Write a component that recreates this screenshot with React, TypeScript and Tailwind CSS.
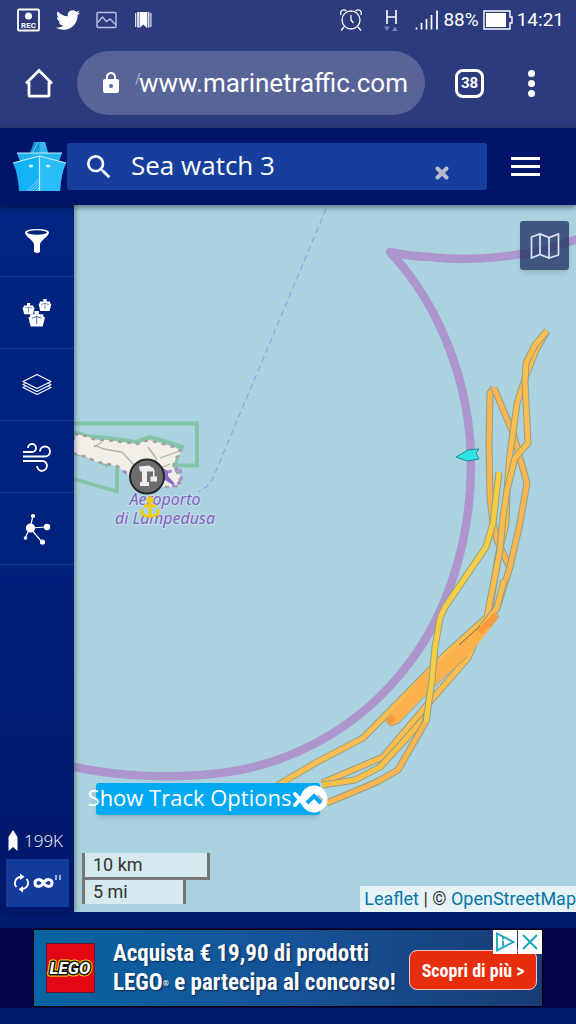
import React from "react";
import { FaTwitter } from "react-icons/fa";
import { MdLock, MdSearch } from "react-icons/md";

const tracks = [
    { color: "#f9b650", points: "494,388 490,393 489,443 490,497 493,523 497,540 510,568" },
    { color: "#f9b650", points: "494,388 513,433 527,483 520,523 510,567 497,608" },
    { color: "#fbbd50", points: "547,331 536,350 527,373 517,403 513,433 510,453 507,490 506,523 498,557 490,607" },
    { color: "#fbbd50", points: "547,331 535,345 526,363 525,382 528,443 515,458 507,490 503,517 500,550 487,617 447,653 383,718 363,738 317,762 283,782 265,794" },
    { color: "#fbbd50", points: "504,580 497,608 480,630 468,658 427,705 383,757 322,783" },
    { color: "#f8c049", points: "425,717 405,740 380,767 355,780 322,785" },
    { color: "#f9b650", points: "427,713 425,723 398,770 377,782 327,803" },
    { color: "#f5cd45", points: "499,472 493,523 486,547 445,607 440,618 435,647 432,680 426,722" },
];

const Track = ({ color, points }: { color: string; points: string }) => {
    return (
        <g fill="none" strokeLinejoin="round">
            <polyline points={points} stroke="#949f86" strokeWidth="7" />
            <polyline points={points} stroke={color} strokeWidth="5" />
        </g>
    )
}

const StatusBar = () => {
    return (
        <div className="flex h-10 items-center justify-between pr-3 pl-4 text-white">
            <div className="flex items-center gap-4">
                <svg width="24" height="24" viewBox="0 0 24 24" fill="none" aria-hidden="true">
                    <rect x="2" y="1.500" width="21" height="21" rx="1" stroke="currentColor" strokeWidth="1.800" />
                    <circle cx="12.500" cy="8" r="3.500" fill="currentColor" />
                    <text x="12.500" y="20" textAnchor="middle" fontSize="8" fontWeight="700" fontFamily="Roboto, sans-serif" fill="currentColor">REC</text>
                </svg>
                <FaTwitter className="h-6 w-6" />
                <svg width="22" height="18" viewBox="0 0 22 18" fill="none" stroke="#b9c2e4" strokeWidth="1.400" aria-hidden="true">
                    <rect x="1" y="1.500" width="19" height="15" rx="1" />
                    <path d="M1.500 11.500 6.500 6l4 4.500L14 8l6 6" />
                </svg>
                <svg width="18" height="18" viewBox="0 0 18 18" aria-hidden="true">
                    <path d="M1 2h1.300v14H1zM16.200 2h1.300v14h-1.300zM3 1h2v15.500H3zM13.500 1h2v15.500h-2z" fill="#d5daec" />
                    <path d="M5.500 1H13v16l-3.700-3.500L5.500 17z" fill="currentColor" />
                </svg>
            </div>
            <div className="flex items-center">
                <svg className="mr-5" width="24" height="24" viewBox="0 0 24 24" fill="none" stroke="currentColor" strokeWidth="1.300" aria-hidden="true">
                    <circle cx="12" cy="12" r="9" />
                    <path d="M12 7v5l2.500 3M2 7C.5 3 4 .500 7.500 3M22 7c1.500-4-2-6.500-5.500-4M5 19l-3 3.500M19 19l3 3.500" />
                </svg>
                <svg className="mr-4" width="16" height="24" viewBox="0 0 16 24" fill="none" aria-hidden="true">
                    <path d="M4 2v14M13 2v14M4 9h9" stroke="currentColor" strokeWidth="1.600" />
                    <path d="M1 18.500h6L4 23zM9 23h6l-3-4.500z" fill="#7480b0" />
                </svg>
                <svg className="mr-1" width="24" height="22" viewBox="0 0 24 22" stroke="currentColor" strokeWidth="1.700" aria-hidden="true">
                    <path d="M1.500 18.500v2M6.500 14v6.500M11.500 10v10.500M16.500 6v14.500M22 1.500v19" />
                </svg>
                <span className="font-[Roboto,sans-serif] text-[19px]">88%</span>
                <svg className="mr-1 ml-1" width="30" height="20" viewBox="0 0 30 20" fill="none" aria-hidden="true">
                    <path d="M1 1h26v6h2v6h-2v6H1z" stroke="currentColor" strokeWidth="1.400" />
                    <path d="M3 3h20v14H3z" fill="currentColor" />
                </svg>
                <span className="font-[Roboto,sans-serif] text-[19px]">14:21</span>
            </div>
        </div>
    )
}

const BrowserBar = () => {
    return (
        <div className="flex h-[88px] items-center pb-0.5 text-white">
            <a href="#home" aria-label="Home" className="flex w-[77px] justify-center">
                <svg width="30" height="30" viewBox="0 0 30 30" fill="none" stroke="currentColor" strokeWidth="2.800">
                    <path d="M2 15.500 15 2.500l13 13M5 14v13q0 1.200 1.200 1.200h17.600Q25 28.200 25 27V14" strokeLinejoin="miter" />
                </svg>
            </a>
            <div className="flex h-16 min-w-0 flex-1 items-center rounded-full bg-[#586398] pr-2 pl-[22px]">
                <MdLock className="h-6 w-6 shrink-0" />
                <span className="ml-3 w-1 shrink-0 pb-2 text-right font-[Roboto,sans-serif] text-[14px] text-[#b6bdd8]">/</span>
                <input aria-label="Address" readOnly value="www.marinetraffic.com" className="min-w-0 flex-1 bg-transparent font-[Roboto,sans-serif] text-[26px] outline-none" />
            </div>
            <button aria-label="Tabs" className="mx-[30px] flex h-[29px] w-[29px] items-center justify-center rounded-lg border-3 border-white font-[Roboto,sans-serif] text-[15px] font-bold">38</button>
            <button aria-label="Menu" className="mr-8 ml-1 flex w-[26px] shrink-0 flex-col items-center gap-[3px]">
                <span className="h-[7px] w-[7px] rounded-full bg-white"></span>
                <span className="h-[7px] w-[7px] rounded-full bg-white"></span>
                <span className="h-[7px] w-[7px] rounded-full bg-white"></span>
            </button>
        </div>
    )
}

const Header = () => {
    return (
        <header className="relative z-20 flex h-[77px] items-center bg-[#001469] pl-3 shadow-[0_2px_6px_rgba(0,0,0,0.5)]">
            <a href="#top" aria-label="MarineTraffic" className="shrink-0">
                <svg width="55" height="52" viewBox="0 0 55 52">
                    <path d="M22 1h11l3 11H18z" fill="#1597dc" />
                    <path d="M27.500 1H33l3 11h-8.500z" fill="#35b6f0" />
                    <path d="M5 12h45l-4 11H9z" fill="#23b4ee" />
                    <path d="M1 22 27.500 15 54 22q-5 10-6 28H7Q6 32 1 22z" fill="#14b2f4" />
                    <path d="M27.500 15 54 22q-5 10-6 28H27.500z" fill="#29bef7" />
                    <path d="M5 12h45M1 22l26.500-7L54 22M27.500 15v35" fill="none" stroke="#c9f0ff" strokeWidth="1.200" />
                    <path d="m15 50 12-12M18 50l9-9M21 50l6-6M24 50l3-3M26 1l-5 10" stroke="#9cdcf8" strokeWidth=".8" />
                    <ellipse cx="19" cy="25" rx="2.200" ry="1.500" fill="#d4f4ff" />
                    <ellipse cx="36" cy="25" rx="2.200" ry="1.500" fill="#d4f4ff" />
                </svg>
            </a>
            <form className="flex h-[47px] min-w-0 flex-1 items-center rounded-[3px] bg-[#163e9c] pl-4">
                <MdSearch className="h-8 w-8 shrink-0 text-white" />
                <input aria-label="Search" defaultValue="Sea watch 3" className="ml-4 min-w-0 flex-1 bg-transparent pb-0.5 font-['Open_Sans',sans-serif] text-[26px] text-white outline-none" />
                <button type="button" aria-label="Clear" className="mt-3 mr-[38px]">
                    <svg width="14" height="14" viewBox="0 0 14 14" stroke="#b9bdcb" strokeWidth="4" strokeLinecap="round">
                        <path d="m2.500 2.500 9 9m0-9-9 9" />
                    </svg>
                </button>
            </form>
            <button aria-label="Open menu" className="mr-9 ml-6 flex w-[29px] flex-col gap-[5px]">
                <span className="h-[3px] bg-white"></span>
                <span className="h-[3px] bg-white"></span>
                <span className="h-[3px] bg-white"></span>
            </button>
        </header>
    )
}

const Boat = ({ transform }: { transform: string }) => {
    return (
        <g transform={transform}>
            <path d="M5 0h4v3h4v2l1.500 1-2 8h-11L-.5 6 1 5V3h4z" fill="#fff" />
            <path d="M7 5v7M2.500 6.500 7 5l4.500 1.500" stroke="#00217c" strokeWidth=".6" fill="none" />
        </g>
    )
}

const Sidebar = () => {
    const item = "flex h-[72px] items-center justify-center border-b border-[#1f3d8e] text-white"
    return (
        <nav className="relative z-10 flex w-[74px] shrink-0 flex-col bg-linear-to-b from-[#002481] via-[#00217c] to-[#001669] shadow-[2px_0_4px_rgba(0,0,0,0.3)]">
            <button aria-label="Filters" className={item}>
                <svg width="26" height="26" viewBox="0 0 26 26" fill="currentColor">
                    <path d="M1 4.500Q1 1 13 1t12 3.500c0 4-9 8-9 12V24q-3 2-6 0v-7.500c0-4-9-8-9-12z" />
                    <ellipse cx="13" cy="4.500" rx="10" ry="2.200" fill="#00237f" />
                </svg>
            </button>
            <button aria-label="Fleets" className={item}>
                <svg width="30" height="30" viewBox="0 0 30 30">
                    <Boat transform="translate(1 5) scale(.8)" />
                    <Boat transform="translate(17 1) scale(.85)" />
                    <Boat transform="translate(7 13) scale(1.100)" />
                </svg>
            </button>
            <button aria-label="Layers" className={item}>
                <svg width="30" height="24" viewBox="0 0 30 24" fill="none" stroke="currentColor" strokeWidth="1.100" strokeLinejoin="round">
                    <path d="m1 8.500 14-7 14 7-14 7zM4 10l-3 1.500 14 7 14-7-3-1.500M4 13l-3 1.500 14 7 14-7-3-1.500" />
                </svg>
            </button>
            <button aria-label="Weather" className={item}>
                <svg width="30" height="30" viewBox="0 0 30 30" fill="none" stroke="currentColor" strokeWidth="1.800">
                    <path d="M1 10h9a4 4 0 1 0-4-4M1 14.500h22a5 5 0 1 0-5-5M1 19h18a5 5 0 1 1-4 5" />
                </svg>
            </button>
            <button aria-label="Density" className={item}>
                <svg width="30" height="32" viewBox="0 0 30 32" fill="currentColor" stroke="currentColor" strokeWidth="1.200">
                    <path d="m8 15 3-12M8 15l17-1M8 15l12 14M8 15 3 25" />
                    <circle cx="8.500" cy="15" r="4" />
                    <circle cx="11" cy="3" r="1.500" />
                    <circle cx="25" cy="14" r="2.600" />
                    <circle cx="20.500" cy="29" r="2" />
                    <circle cx="3.500" cy="25" r="1.200" />
                </svg>
            </button>
            <div className="mt-auto flex items-center gap-1.5 pl-2 text-white">
                <svg width="10" height="21" viewBox="0 0 10 21" fill="currentColor" aria-hidden="true"><path d="m5 0 4.500 7v14L5 17 .500 21V7z" /></svg>
                <span className="font-['Open_Sans',sans-serif] text-[17px] font-light">199K</span>
            </div>
            <button aria-label="Refresh rate" className="mt-1.5 mr-[5px] mb-[5px] ml-1.5 flex h-12 items-center justify-center bg-[#133b99] text-white">
                <svg width="52" height="22" viewBox="0 0 52 22" fill="none" stroke="currentColor" strokeWidth="1.800">
                    <path d="M4.500 15A6 6 0 0 1 9 5M14.500 7A6 6 0 0 1 10 17" />
                    <path d="m8 1.500 4.500 3.200L8 8zM11 14l-4.500 3.300L11 20.500z" fill="currentColor" stroke="none" />
                    <path d="M31.500 11c-3-5-8.500-4-8.500 0s5.500 5 8.500 0 8.500-4 8.500 0-5.500 5-8.500 0z" strokeWidth="3" />
                    <path d="M44 3v5M48 3v5" strokeWidth="1.200" />
                </svg>
            </button>
        </nav>
    )
}

const MapView = () => {
    return (
        <section className="relative min-w-0 flex-1 overflow-hidden bg-[#aad3df]">
            <svg className="absolute inset-0 h-full w-full" viewBox="74 205 502 707" preserveAspectRatio="xMidYMid slice" role="img" aria-label="Map">
                <path d="M326 209 213 478q-4 9-15 14" fill="none" stroke="#8ba9df" strokeWidth="1.300" strokeDasharray="6 4" />
                <g fill="none" stroke="#83c5a8" strokeWidth="3.800">
                    <path d="M74 423.500h123v42h-24M74 479l43 12.500v-25" />
                    <path d="m74 432 12 4 22 2 28 4 14-5 14 4 18 6-5 10-2 10-12 5M74 453l18 3 16 10" strokeWidth="4" />
                </g>
                <path d="m74 434 12 2 10 4 12 0 14 2 16 2 10-4 12 3 14 4 8 5-6 6-3 9 7 9-1 10-12 1-18-3-20-9-12-9-20-4-10-5-15-4z" fill="#f2efe9" stroke="#a79f98" strokeWidth="2.500" strokeDasharray="4 5" />
                <path d="m94 445 10 4 18 3 12 13 20 0M102 442l-8 5M148 447l8 11 0 12M160 458l20-7M156 470l14-6" fill="none" stroke="#b6aca8" strokeWidth="1.300" />
                <path d="m163 468 5 3 0 5 7 8-2 1-8-5-4 4z" fill="#8a69c9" />
                <path d="m168 472 12-4 2 14-10 4M123 471l8 4" fill="none" stroke="#a98ad0" strokeWidth="3" strokeDasharray="4 3" />
                <path d="M580 238C530 258 470 262 430 257Q408 256 390 252C440 305 471 385 471 465C471 541 447 613 410 662C358 732 280 771 200 775C150 779 100 773 70 766" fill="none" stroke="#ac96cd" strokeWidth="8.500" strokeLinejoin="round" />
                {tracks.slice(0, 7).map((t) => <Track key={t.points} {...t} />)}
                <path d="m385 721 5 5 8-3 34-35 37-33 29-36-1-7-17 13-60 53z" fill="#fbb24c" />
                <path d="m386 721 5 5 8-3 34-35 34-31M490 627l9-11-4-4" fill="none" stroke="#a3a07d" strokeWidth="1" />
                <path d="m459 645 21-19" stroke="#7b7048" strokeWidth="1" />
                <path d="m388 722 6-5M480 632l16-17" stroke="#fa983c" strokeWidth="6" />
                <Track {...tracks[7]} />
                <path d="m456 457 12-7 11-1-3 4 3 6-12 2z" fill="#2fe3e6" stroke="#1d8c96" strokeWidth="1" />
                <g fill="#8461c4" stroke="#c6dfea" strokeWidth="2" paintOrder="stroke" fontFamily="'Noto Sans', sans-serif" fontSize="16" fontStyle="italic" textAnchor="middle">
                    <text x="165" y="505">Aeroporto</text>
                    <text x="165" y="524">di Lampedusa</text>
                </g>
                <circle cx="147" cy="476.500" r="17" fill="#6d6d6d" stroke="#262626" strokeWidth="2" />
                <path d="M139 466.500l10-1 5 3v3h-14zM142 471h5v11h2v4h-9v-4h2zM153 470h1.500v6.500h2.500v5h-6.500v-5h2.500z" fill="#eee" />
                <g fill="none" stroke="#f2cb0d" strokeWidth="2.800">
                    <circle cx="150" cy="500" r="2" />
                    <path d="M150 502v14M144 506h12M142 509v5q8 5 16 0v-5" />
                </g>
            </svg>
            <button aria-label="Map type" className="absolute top-4 right-[7px] flex h-[49px] w-[49px] items-center justify-center rounded-[3px] bg-[#1b2e5f]/75 shadow-md">
                <svg width="30" height="26" viewBox="0 0 30 26" fill="none" stroke="#dbe3f1" strokeWidth="1.700">
                    <path d="m1.500 4 8.500-3 9 3.500L28.500 1v21L19 25l-9-3.500L1.500 25zM10 1v20.500M19 4.500V25" />
                </svg>
            </button>
            <button className="absolute bottom-[97px] left-[22px] flex h-8 w-56 items-center justify-center rounded-[3px] bg-[#00a9f1] font-['Open_Sans',sans-serif] text-[22px] whitespace-nowrap text-white shadow-md">
                <span className="shrink-0 pb-[3px]">Show Track Options</span>
                <svg className="shrink-0" width="37" height="28" viewBox="0 0 37 28" fill="none" aria-hidden="true">
                    <path d="m4 9 10 11M14 9 4 20" stroke="#fff" strokeWidth="4" strokeLinecap="round" />
                    <circle cx="23" cy="14" r="13.500" fill="#fff" />
                    <path d="m26 11 5 5" stroke="#aebfd0" strokeWidth="4" />
                    <path d="m16 18 7-7 7 7" stroke="#00a9f1" strokeWidth="4" />
                </svg>
            </button>
            <div className="absolute bottom-2 left-2 flex flex-col items-start font-[Roboto,sans-serif] text-[18px] leading-6 text-[#333]">
                <div className="w-32 border-x-3 border-b-3 border-[#777] bg-white/50 pl-2">10 km</div>
                <div className="w-[104px] border-x-3 border-[#777] bg-white/50 pl-2">5 mi</div>
            </div>
            <div className="absolute right-0 bottom-0 bg-white/70 pl-1 font-[Roboto,sans-serif] text-[18px] leading-[26px] whitespace-nowrap text-[#333]">
                <a href="#leaflet" className="text-[#0078a8]">Leaflet</a> | © <a href="#osm" className="text-[#0078a8]">OpenStreetMap</a>
            </div>
        </section>
    )
}

const Banner = () => {
    return (
        <footer className="bg-[#001a6e] py-4">
            <div className="flex h-20 items-center justify-center bg-[#04034a]">
                <div className="relative flex h-[78px] w-full max-w-[510px] items-center border border-black bg-linear-to-r from-[#0864a2] via-[#155398] to-[#183c76] pl-3 font-['Liberation_Sans_Narrow','Roboto_Condensed',sans-serif] font-bold text-white">
                    <svg className="shrink-0" width="49" height="50" viewBox="0 0 49 50" role="img" aria-label="LEGO">
                        <path d="M.5.5h48v49H.5z" fill="#e30613" stroke="#5c1733" />
                        <g fontFamily="'Liberation Sans Narrow', Roboto, sans-serif" fontSize="17" fontWeight="700" fontStyle="italic" textAnchor="middle" strokeLinejoin="round">
                            <text x="24" y="31" fill="#ffd500" stroke="#ffd500" strokeWidth="5">LEGO</text>
                            <text x="24" y="31" fill="#fff" stroke="#111" strokeWidth="3" paintOrder="stroke">LEGO</text>
                        </g>
                    </svg>
                    <p className="ml-[18px] text-[23px] leading-[29px] whitespace-nowrap [text-shadow:1px_1px_2px_#0b2350]">
                        Acquista € 19,90 di prodotti<br />LEGO<sup className="text-[8px]">®</sup> e partecipa al concorso!
                    </p>
                    <a href="#offer" className="absolute right-[5px] bottom-4 flex h-10 w-32 items-center justify-center rounded-lg border border-[#f4c7c2] bg-[#e62d0c] text-[18px] whitespace-nowrap">Scopri di più &gt;</a>
                    <div className="absolute top-0 right-0 flex gap-px">
                        <button aria-label="Ad choices" className="flex h-6 w-6 items-center justify-center bg-white">
                            <svg width="20" height="20" viewBox="0 0 20 20" fill="none" stroke="#16a3bd" strokeWidth="1.800"><path d="M2 1.500v17L18.500 10zM8 8.500V14M8 5.500v2" /></svg>
                        </button>
                        <button aria-label="Close ad" className="flex h-6 w-6 items-center justify-center bg-white">
                            <svg width="16" height="16" viewBox="0 0 16 16" stroke="#16a3bd" strokeWidth="1.800"><path d="m1 1 14 14M15 1 1 15" /></svg>
                        </button>
                    </div>
                </div>
            </div>
        </footer>
    )
}

const App = () => {
    return (
        <div className="flex min-h-screen w-full flex-col bg-[#001a6e]">
            <div className="bg-[#2c3b7b]">
                <StatusBar />
                <BrowserBar />
            </div>
            <Header />
            <main className="flex min-h-[600px] flex-1">
                <Sidebar />
                <MapView />
            </main>
            <Banner />
        </div>
    )
}

export default App;
